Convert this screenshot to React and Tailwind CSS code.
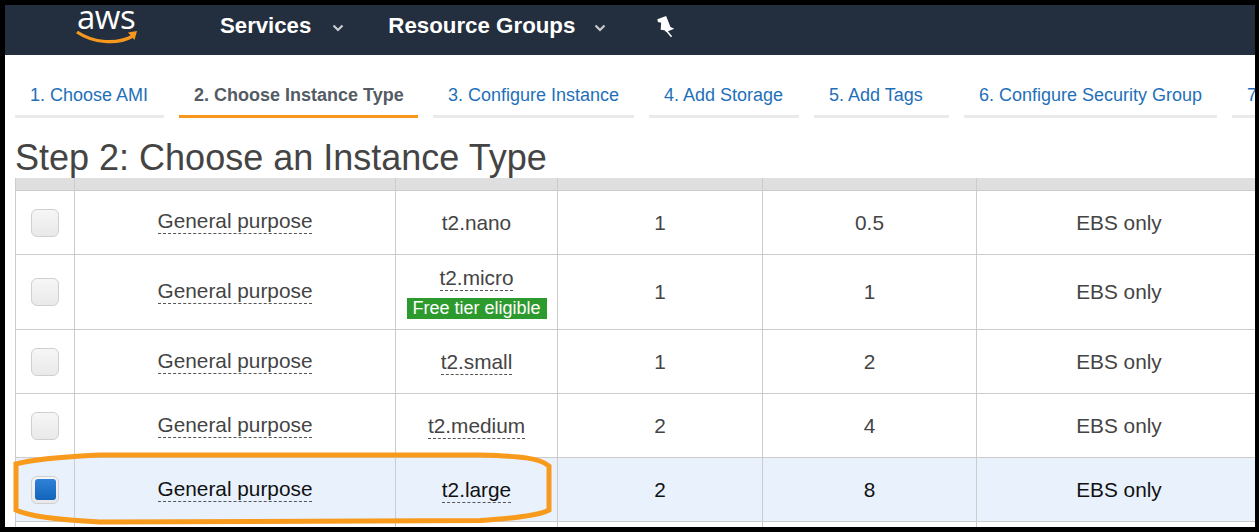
const tabs = [
  ["1. Choose AMI", "w-[149px]"],
  ["2. Choose Instance Type", "w-[239px]"],
  ["3. Configure Instance", "w-[201px]"],
  ["4. Add Storage", "w-[150px]"],
  ["5. Add Tags", "w-[135px]"],
  ["6. Configure Security Group", "w-[253px]"],
  ["7. Review", "w-[120px]"],
];

const rows = [
  { type: "t2.nano", cpu: "1", mem: "0.5", h: "h-[64px]", up: true },
  { type: "t2.micro", cpu: "1", mem: "1", h: "h-[75px]", free: true, up: true },
  { type: "t2.small", cpu: "1", mem: "2", h: "h-[64px]", dashed: true },
  { type: "t2.medium", cpu: "2", mem: "4", h: "h-[64px]", dashed: true },
  { type: "t2.large", cpu: "2", mem: "8", h: "h-[64px]", dashed: true, selected: true },
];

const grid = "grid grid-cols-[59px_321px_162px_205px_214px_1fr]";
const cell = "flex flex-col items-center justify-center border-r border-[#cccccc]";

function Chevron({ className }) {
  return (
    <svg className={className} width="12" height="8" viewBox="0 0 12 8">
      <path d="M1.5 1.5 L6 6 L10.5 1.5" fill="none" stroke="#c9ccd0" strokeWidth="2.2" />
    </svg>
  );
}

function Row({ r }) {
  return (
    <div className={`${grid} ${r.h} border-b border-[#cccccc] ${r.selected ? "bg-[#e9f1fd] text-[#111111]" : "text-[#444444]"}`}>
      <div className={cell}>
        <div className="w-[28px] h-[28px] rounded-[6px] border border-[#cfcfcf] bg-gradient-to-b from-[#f6f6f6] to-[#e9e9e9] flex items-center justify-center">
          {r.selected && <div className="w-[21px] h-[21px] rounded-[3px] bg-gradient-to-b from-[#2f82d8] to-[#1264bb]" />}
        </div>
      </div>
      <div className={cell}>
        <span className={`text-[20.8px] leading-[22px] border-b border-dashed border-[#555555] pb-px ${r.up ? "mb-[1px]" : "mt-[1px]"}`}>General purpose</span>
      </div>
      <div className={cell}>
        {r.free ? (
          <>
            <span className="text-[20.8px] leading-[22px] border-b border-dashed border-[#555555] pb-px mt-[2px]">{r.type}</span>
            <span className="mt-[7px] bg-[#2d9a2d] text-white text-[18px] leading-[21px] w-[140px] text-center">Free tier eligible</span>
          </>
        ) : (
          <span className={`text-[20.8px] leading-[22px] pb-px mt-[2px] border-b ${r.dashed ? "border-dashed border-[#555555]" : "border-transparent"}`}>{r.type}</span>
        )}
      </div>
      <div className={`${cell} text-[20.8px]`}>{r.cpu}</div>
      <div className={`${cell} text-[20.8px]`}>{r.mem}</div>
      <div className="flex items-center justify-center text-[20.8px] pl-[6px]">EBS only</div>
    </div>
  );
}

export default function App() {
  return (
    <div className="relative w-[1259px] h-[532px] bg-black pt-[5px] pl-[5px] pr-[4px] pb-[5px] overflow-hidden font-['Liberation_Sans',Arial,sans-serif]">
      <div className="w-full h-full bg-white overflow-hidden flex flex-col">
        <header className="h-[50px] shrink-0 bg-[#232f3e] flex items-center text-white relative pb-[8px]">
          <div className="w-[215px] shrink-0 h-[50px] mb-[-8px] relative overflow-hidden">
            <span className="absolute left-[72px] top-[-8px] text-[33px] leading-[40px] tracking-[-0.5px] font-['Open_Sans',sans-serif]">aws</span>
            <svg className="absolute left-[70px] top-[24px]" width="64" height="16" viewBox="0 0 64 16">
              <path d="M2 3 C 18 14, 42 16, 58 7" fill="none" stroke="#f7981d" strokeWidth="3.2" />
              <path d="M53 3.5 L62 2 L59.5 11" fill="#f7981d" />
            </svg>
          </div>
          <span className="text-[22.2px] font-bold leading-none">Services</span>
          <Chevron className="ml-[21px] mt-[3px]" />
          <span className="ml-[44px] text-[22.3px] font-bold leading-none">Resource Groups</span>
          <Chevron className="ml-[19px] mt-[3px]" />
          <svg className="ml-[48px] mt-[2px]" width="22" height="24" viewBox="0 0 20 22">
            <path d="M3 4 L11 1 L12.5 4.5 L15 11 L18.5 12.5 L11 15.5 L9.5 14 L6 13.5 L6.5 7 L3.5 6.5 Z" fill="white" />
            <path d="M11 14 L16 20" stroke="white" strokeWidth="1.4" />
          </svg>
        </header>

        <nav className="flex gap-[15px] pl-[10px] pt-[28px] shrink-0">
          {tabs.map(([t, w], i) => (
            <div key={t} className={`${w} shrink-0 h-[35px] pl-[15px] border-b-[3px] text-[18px] leading-[24px] whitespace-nowrap overflow-hidden ${i === 1 ? "border-[#f7981d] text-[#545b64] font-bold" : "border-[#eaeaea] text-[#1f70b8]"}`}>
              {t}
            </div>
          ))}
        </nav>

        <h1 className="ml-[10px] mt-[19px] text-[36px] leading-[42px] h-[42px] text-[#444444] shrink-0 whitespace-nowrap">Step 2: Choose an Instance Type</h1>

        <section className="ml-[10px] border-l border-[#cccccc] mt-[-1px]">
          <div className={`${grid} h-[13px] bg-[#dfdfdf] border-b border-[#cccccc]`}>
            <div className="border-r border-[#cccccc]" />
            <div className="border-r border-[#cccccc]" />
            <div className="border-r border-[#cccccc]" />
            <div className="border-r border-[#cccccc]" />
            <div className="border-r border-[#cccccc]" />
            <div />
          </div>
          {rows.map((r) => (
            <Row key={r.type} r={r} />
          ))}
          <div className={`${grid} h-[20px]`}>
            <div className="border-r border-[#cccccc]" />
            <div className="border-r border-[#cccccc]" />
            <div className="border-r border-[#cccccc]" />
            <div className="border-r border-[#cccccc]" />
            <div className="border-r border-[#cccccc]" />
            <div />
          </div>
        </section>
      </div>

      <svg className="absolute left-0 top-0 pointer-events-none" width="1259" height="532" viewBox="0 0 1259 532">
        <path
          d="M16 464 C 30 460, 60 457, 100 455 L 480 455 C 520 456, 540 458, 549 466 L 549 510 C 540 515, 520 518, 480 520.5 L 100 522 C 60 520, 30 517, 16 510 Z"
          fill="none"
          stroke="#f89a1c"
          strokeWidth="5"
        />
      </svg>
    </div>
  );
}
